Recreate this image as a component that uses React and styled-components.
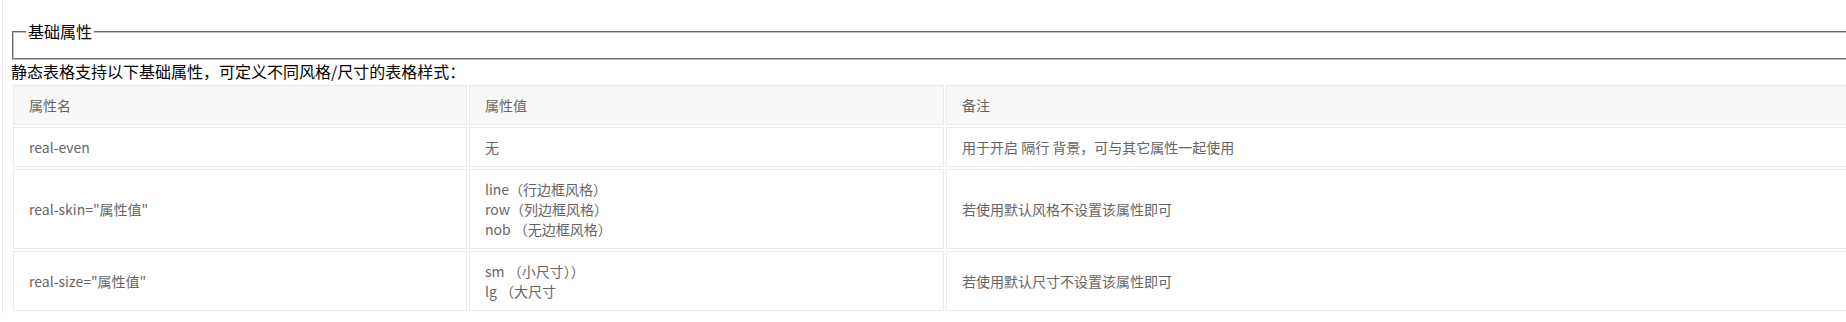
import React from 'react';
import styled, { createGlobalStyle } from 'styled-components';

const GlobalStyle = createGlobalStyle`
   html, body {
      margin: 0;
      padding: 0;
      overflow: hidden;
      background: #fff;
   }
   body {
      font-family: "Noto Sans CJK SC", "Noto Sans", sans-serif;
      font-size: 16px;
      color: #000;
   }
`

const Page = styled.div`
   width: 2100px;
   margin-left: 2px;
   padding-left: 8px;
   border-left: 1px solid #e6e6e6;
   min-height: 322px;
`

const Note = styled.div`
   margin-top: -21px;
   padding-left: 56px;
   line-height: 22px;
   white-space: nowrap;
`

const Block = styled.fieldset`
   margin: 20px 0 0 1px;
   padding: 0.35em 0.75em 0.625em;
   border: 2px groove #c0c0c0;
   min-height: 0;

   legend {
      padding: 0 2px;
      font-size: 16px;
      line-height: 21px;
   }
`

const Intro = styled.p`
   margin: 0;
   line-height: 22px;
   white-space: nowrap;
`

const Table = styled.table`
   width: 2000px;
   margin-top: 1px;
   border-collapse: separate;
   border-spacing: 2px;
   table-layout: fixed;
   color: #666;
   font-size: 14px;
`

const Cell = styled.td`
   box-sizing: border-box;
   width: ${p => p.$w ? `${p.$w}px` : 'auto'};
   padding: 9px 15px;
   line-height: 20px;
   text-align: left;
   font-weight: normal;
   vertical-align: middle;
   border: 1px solid #eaeaea;
   background: ${p => p.$head ? '#f8f8f8' : '#fff'};
`

const rows = [
   { name: 'real-even', value: ['无'], note: '用于开启 隔行 背景，可与其它属性一起使用' },
   {
      name: 'real-skin="属性值"',
      value: ['line（行边框风格）', 'row（列边框风格）', 'nob （无边框风格）'],
      note: '若使用默认风格不设置该属性即可',
   },
   {
      name: 'real-size="属性值"',
      value: ['sm （小尺寸））', 'lg （大尺寸'],
      note: '若使用默认尺寸不设置该属性即可',
   },
];

function App() {
   return (
      <>
         <GlobalStyle />
         <Page>
            <Note>表格的 class 使用 real-table，表示为一个静态表格</Note>
            <Block>
               <legend>基础属性</legend>
            </Block>
            <Intro>静态表格支持以下基础属性，可定义不同风格/尺寸的表格样式：</Intro>
            <Table>
               <thead>
                  <tr>
                     <Cell as="th" $head $w={454}>属性名</Cell>
                     <Cell as="th" $head $w={475}>属性值</Cell>
                     <Cell as="th" $head>备注</Cell>
                  </tr>
               </thead>
               <tbody>
                  {rows.map(row => (
                     <tr key={row.name}>
                        <Cell>{row.name}</Cell>
                        <Cell>
                           {row.value.map((v, i) => (
                              <div key={i}>{v}</div>
                           ))}
                        </Cell>
                        <Cell>{row.note}</Cell>
                     </tr>
                  ))}
               </tbody>
            </Table>
         </Page>
      </>
   )
};

export default App;
